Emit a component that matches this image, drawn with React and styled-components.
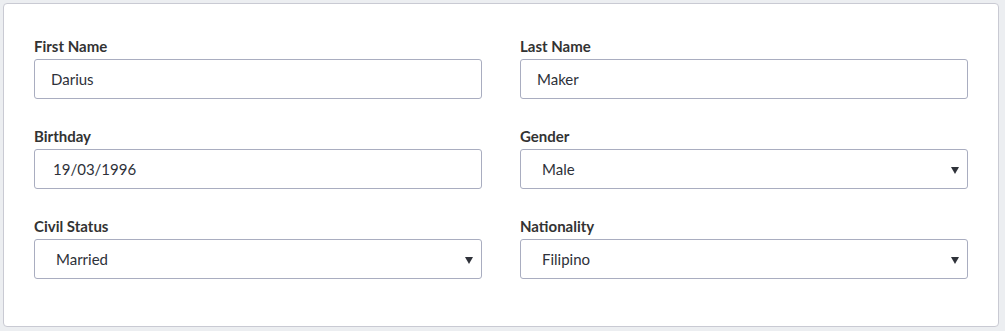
import React from "react";
import styled, { createGlobalStyle } from "styled-components";

const Global = createGlobalStyle`
  html, body { margin: 0; padding: 0; background: #eceef1; }
  body { font-family: Lato, "Open Sans", sans-serif; }
`;

const Page = styled.div`
  padding: 3px;
  height: 331px;
  box-sizing: border-box;
`;

const Card = styled.div`
  width: 996px;
  height: 324px;
  box-sizing: border-box;
  background: #fff;
  border: 1px solid #c9cad3;
  border-radius: 4px;
  padding: 32px 30px 0 30px;
`;

const Grid = styled.div`
  display: grid;
  grid-template-columns: 448px 448px;
  column-gap: 38px;
  row-gap: 27px;
`;

const Field = styled.div`
  display: flex;
  flex-direction: column;
`;

const Label = styled.label`
  font-family: Lato, sans-serif;
  font-weight: 700;
  font-size: 15px;
  line-height: 20px;
  margin-bottom: 3px;
  color: #333;
`;

const Box = styled.div`
  position: relative;
  height: 40px;
  box-sizing: border-box;
  border: 1px solid #a9adc0;
  border-radius: 3px;
  display: flex;
  align-items: center;
  padding-left: ${(p) => p.$pad}px;
  font-family: Lato, sans-serif;
  font-size: 15px;
  color: #2e3139;
`;

const Arrow = styled.span`
  position: absolute;
  right: 8px;
  top: 17px;
  width: 0;
  height: 0;
  border-left: 4px solid transparent;
  border-right: 4px solid transparent;
  border-top: 7px solid #2f323a;
`;

const fields = [
  { label: "First Name", value: "Darius", pad: 16 },
  { label: "Last Name", value: "Maker", pad: 16 },
  { label: "Birthday", value: "19/03/1996", pad: 18 },
  { label: "Gender", value: "Male", pad: 21, select: true },
  { label: "Civil Status", value: "Married", pad: 21, select: true },
  { label: "Nationality", value: "Filipino", pad: 21, select: true },
];

export default function App() {
  return (
    <>
      <Global />
      <Page>
        <Card>
          <Grid>
            {fields.map((f) => (
              <Field key={f.label}>
                <Label>{f.label}</Label>
                <Box $pad={f.pad}>
                  {f.value}
                  {f.select && <Arrow />}
                </Box>
              </Field>
            ))}
          </Grid>
        </Card>
      </Page>
    </>
  );
}
